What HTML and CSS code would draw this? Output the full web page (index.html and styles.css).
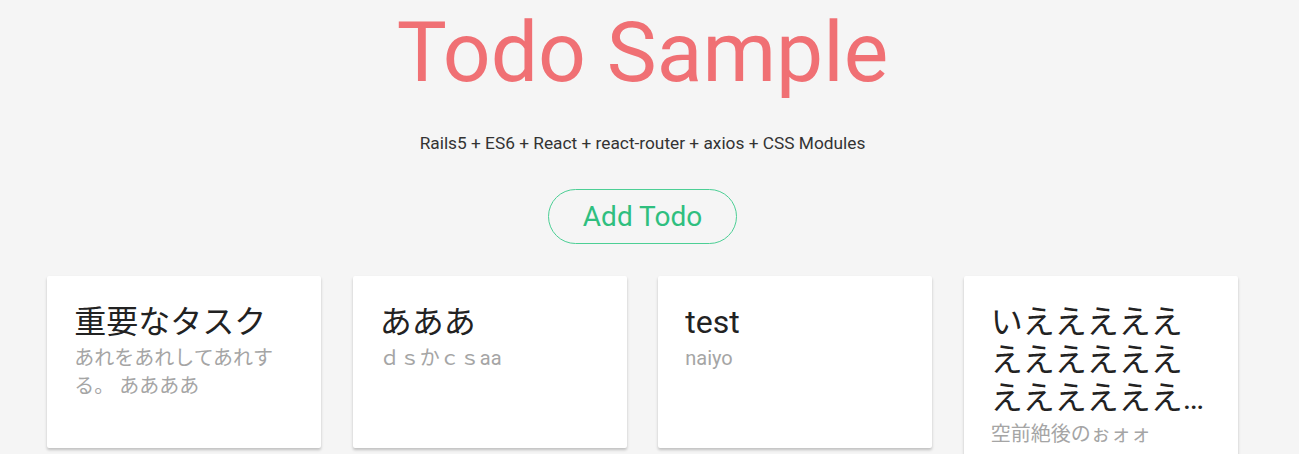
FILE: index.html
```html
<!DOCTYPE html>
<html>
<head>
    <title>Todo Sample</title>
    <link rel="stylesheet" href="styles.css">
</head>
<body>
    <div id="app">
        <div id="header">
            <h1>Todo Sample</h1>
            <p class="lead">Rails5 + ES6 + React + react-router + axios + CSS Modules</p>
            <button id="add-btn">Add Todo</button>
        </div>

        <div class="todo-list">
            <div class="todo-card">
                <div class="todo-title">重要なタスク</div>
                <div class="todo-body">あれをあれしてあれする。 ああああ</div>
            </div>
            <div class="todo-card">
                <div class="todo-title">あああ</div>
                <div class="todo-body">ｄｓかｃｓaa</div>
            </div>
            <div class="todo-card">
                <div class="todo-title">test</div>
                <div class="todo-body">naiyo</div>
            </div>
            <div class="todo-card">
                <div class="todo-title">いえええええええええええええええええええええええええええ</div>
                <div class="todo-body">空前絶後のぉォォ</div>
            </div>
        </div>
    </div>
</body>
</html>
```

FILE: styles.css
```css
html, body {
    margin: 0;
    overflow: hidden;
}

body {
    background-color: #f5f5f5;
    font-family: Roboto, "Noto Sans CJK JP", sans-serif;
    color: #222;
}

#app {
    width: 1285px;
}

#header {
    display: flex;
    flex-direction: column;
    align-items: center;
}

h1 {
    margin: 4px 0 0;
    font-size: 84px;
    font-weight: 400;
    color: #f07074;
    line-height: 98px;
}

.lead {
    margin: 31px 0 0;
    font-size: 17.3px;
    line-height: 20px;
    color: #333;
}

#add-btn {
    margin-top: 36px;
    width: 189px;
    height: 55px;
    padding: 0;
    border: 1.5px solid #4ccf95;
    border-radius: 28px;
    background-color: transparent;
    color: #2fbf7f;
    font-family: Roboto, sans-serif;
    font-size: 28px;
    cursor: pointer;
}

.todo-list {
    display: grid;
    grid-template-columns: repeat(4, 274px);
    column-gap: 31.5px;
    justify-content: center;
    align-items: start;
    margin-top: 32px;
}

.todo-card {
    background-color: #fff;
    border-radius: 2px;
    box-shadow: 0 2px 3px rgba(0, 0, 0, 0.22);
    min-height: 172px;
    box-sizing: border-box;
    padding: 27px 28px 27px 27px;
}

.todo-title {
    font-size: 32px;
    line-height: 38px;
    color: #222;
    display: -webkit-box;
    -webkit-line-clamp: 3;
    -webkit-box-orient: vertical;
    overflow: hidden;
}

.todo-body {
    margin: 3px 6px 0 0;
    font-size: 20px;
    line-height: 28px;
    color: #a5a5a5;
}
```
